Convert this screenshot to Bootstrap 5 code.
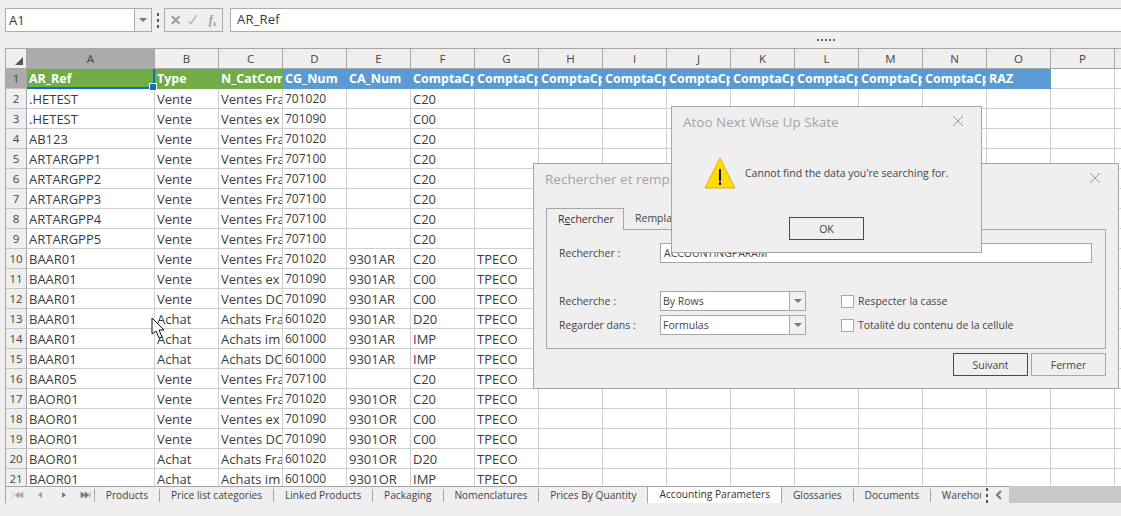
<!doctype html>
<html lang="en">

<head>
    <meta charset="utf-8">
    <meta name="viewport" content="width=device-width, initial-scale=1">
    <title>Accounting Parameters</title>

    <link href="https://cdn.jsdelivr.net/npm/bootstrap@5.3.3/dist/css/bootstrap.min.css" rel="stylesheet">
    <style>
        html, body {
            height: 516px;
            overflow: hidden;
        }

        body {
            background: #efefef;
            color: #3b3b3b;
            font-family: "Open Sans", "Noto Sans", sans-serif;
            font-size: 10.5px;
        }

        .workspace {
            position: relative;
            height: 516px;
            padding: 8px 0 0 5px;
        }

        /* formula bar */
        .formula-row {
            height: 24px;
        }

        .name-box {
            width: 147px;
            height: 24px;
            background: #fff;
            border: 1px solid #ababab;
        }

        .name-text {
            flex: 1;
            padding-left: 3px;
            font-size: 13px;
            line-height: 22px;
        }

        .drop-part {
            width: 17px;
            border-left: 1px solid #ababab;
            background: #f1f1f1;
        }

        .caret-down {
            width: 0;
            height: 0;
            border-left: 4px solid transparent;
            border-right: 4px solid transparent;
            border-top: 4px solid #777;
        }

        .grip-v {
            width: 12px;
            flex: none;
            gap: 3px;
        }

        .grip-v i {
            display: block;
            width: 2px;
            height: 3px;
            background: #555;
        }

        .fx-group {
            width: 59px;
            height: 24px;
            border: 1px solid #ababab;
            gap: 6px;
            padding: 0 0 0 5px;
            margin-right: 7px;
            color: #9a9a9a;
        }

        .fx-mark {
            font-family: "Liberation Serif", serif;
            font-style: italic;
            font-weight: 700;
            font-size: 12px;
            width: 14px;
            margin-left: 4px;
        }

        .fx-mark sub {
            font-size: 8px;
        }

        .formula-input {
            flex: 1;
            height: 24px;
            background: #fff;
            border: 1px solid #ababab;
            border-right: 0;
            padding-left: 6px;
            font-size: 13px;
            line-height: 20px;
            letter-spacing: .2px;
        }

        .grip-h {
            height: 16px;
            padding: 7px 0 0 812px;
            gap: 2px;
        }

        .grip-h i {
            display: block;
            width: 2px;
            height: 2px;
            background: #666;
        }

        /* sheet */
        .sheet-wrap {
            height: 455px;
            border: 1px solid #a6a6a6;
            border-right: 0;
            border-bottom: 0;
            overflow: hidden;
        }

        .sheet-clip {
            height: 437px;
            overflow: hidden;
            background: #fff;
        }

        .sheet-grid {
            table-layout: fixed;
            width: 1173px;
            border-collapse: separate;
            border-spacing: 0;
            font-size: 13px;
        }

        .col-head {
            width: 21px;
        }

        .col-wide {
            width: 128px;
        }

        .col-std {
            width: 64px;
        }

        .sheet-grid th,
        .sheet-grid td {
            height: 20px;
            padding: 1px 0 0 2px;
            border-right: 1px solid #d0d0d0;
            border-bottom: 1px solid #d0d0d0;
            white-space: nowrap;
            overflow: hidden;
            line-height: 18px;
        }

        .sheet-grid td.num-cell {
            font-size: 12px;
        }

        .sheet-grid thead th {
            background: #efefef;
            border-color: #a6a6a6;
            font-weight: 400;
            text-align: center;
            padding: 0;
            color: #444;
            font-size: 11.5px;
        }

        .sheet-grid tbody th {
            background: #efefef;
            border-color: #c4c4c4;
            border-right-color: #a6a6a6;
            font-weight: 400;
            text-align: center;
            padding: 0;
            color: #444;
            font-size: 11.5px;
        }

        .sheet-grid thead th.is-active,
        .sheet-grid tbody th.is-active {
            background: #ababab;
        }

        .corner {
            position: relative;
        }

        .corner svg {
            position: absolute;
            right: 3px;
            bottom: 3px;
        }

        .sheet-grid td.head-green,
        .sheet-grid td.head-blue {
            color: #fff;
            font-weight: 700;
            font-size: 12.5px;
            border-color: transparent;
        }

        .sheet-grid td.head-green {
            background: #70ad47;
        }

        .sheet-grid td.head-blue {
            background: #5b9bd5;
        }

        .sheet-grid td.sel-cell {
            overflow: visible;
            position: relative;
        }

        .sel-bottom {
            position: absolute;
            left: 0;
            right: 0;
            bottom: -1px;
            height: 2px;
            background: #0a70c0;
        }

        .sel-right {
            position: absolute;
            top: 0;
            right: -1px;
            bottom: 2px;
            width: 2px;
            background: #0a70c0;
        }

        .sel-handle {
            position: absolute;
            right: -3px;
            bottom: -3px;
            width: 6px;
            height: 6px;
            background: #0a70c0;
            border: 1px solid #fff;
            box-sizing: content-box;
            z-index: 2;
        }

        /* sheet tabs */
        .tab-strip {
            height: 18px;
            border-top: 1px solid #a6a6a6;
            border-bottom: 1px solid #a6a6a6;
            background: #efefef;
        }

        .tab-nav {
            width: 89px;
            height: 13px;
            flex: none;
            border-right: 1px solid #a6a6a6;
        }

        .tab-list {
            width: 886px;
            flex: none;
            overflow: hidden;
            white-space: nowrap;
        }

        .sheet-tab {
            flex: none;
            padding: 0 11px 0 10.8px;
            line-height: 13px;
            height: 13px;
            border-right: 1px solid #a6a6a6;
            color: #444;
            font-size: 10.2px;
        }

        .sheet-tab.is-on {
            height: 18px;
            line-height: 17px;
            margin: -1px 0 -1px -1px;
            padding: 0 11px 0 12px;
            background: #fff;
            border-left: 1px solid #a6a6a6;
            border-right: 1px solid #a6a6a6;
            color: #333;
        }

        .sheet-tab.no-line {
            border-right: 0;
        }

        .sheet-tab.cut {
            border-right: 0;
            padding-right: 0;
        }

        .scroll-left {
            width: 28px;
            flex: none;
        }

        .scroll-rest {
            flex: 1;
            height: 18px;
            margin: -1px 0;
            background: #c8c8c8;
        }

        /* dialogs */
        .win-box {
            position: absolute;
            background: #efefef;
            border: 1px solid #a6a6a6;
            color: #444;
        }

        .find-win {
            left: 533px;
            top: 163px;
            width: 586px;
            height: 226px;
        }

        .alert-win {
            left: 671px;
            top: 106px;
            width: 311px;
            height: 147px;
        }

        .win-title {
            color: #a3a3a3;
            font-size: 13.5px;
            line-height: 18px;
        }

        .win-close {
            position: absolute;
            top: 8px;
            right: 17px;
        }

        .find-head {
            padding: 6px 11px 0;
            height: 44px;
        }

        .find-tabs {
            margin: 0 12px;
            border: 0;
            height: 21px;
        }

        .find-tabs .nav-link {
            height: 21px;
            padding: 0 11px;
            line-height: 20px;
            font-size: 10.5px;
            color: #444;
            background: transparent;
            border: 0;
            border-radius: 0;
            margin: 0;
        }

        .find-tabs .nav-link.active {
            width: 78px;
            color: #333;
            background: #efefef;
            border: 1px solid #a6a6a6;
            border-bottom: 0;
            height: 22px;
            position: relative;
            z-index: 1;
        }

        .find-panel {
            margin: 0 12px;
            height: 120px;
            padding: 13px 13px 0 12px;
            border: 1px solid #a6a6a6;
        }

        .field-label {
            width: 101px;
            flex: none;
        }

        .text-nudge {
            padding-top: 2px;
        }

        .find-input {
            width: 432px;
            height: 20px;
            padding: 0 3px;
            background: #fff;
            border: 1px solid #a6a6a6;
            font-size: 10.5px;
            line-height: 18px;
            color: #444;
        }

        .find-row {
            height: 20px;
        }

        .find-gap {
            margin-top: 28px;
        }

        .combo-box {
            width: 146px;
            height: 20px;
            background: #fff;
            border: 1px solid #a6a6a6;
            flex: none;
        }

        .combo-text {
            flex: 1;
            padding-left: 2px;
            line-height: 18px;
        }

        .combo-box .drop-part {
            width: 16px;
        }

        .find-panel .tick-box[type=checkbox] {
            margin: 0 4px 0 35px;
            width: 13px;
            height: 13px;
            flex: none;
            border-radius: 0;
            border-color: #a6a6a6;
        }

        .win-btn {
            width: 75px;
            height: 23px;
            padding: 0;
            border-radius: 0;
            font-size: 10.5px;
            line-height: 20px;
            color: #444;
            background: #efefef;
            border: 1px solid #a6a6a6;
        }

        .win-btn.is-default {
            border-color: #4a4a4a;
        }

        .find-actions {
            gap: 3px;
            padding: 4px 12px 0 0;
        }

        .alert-head {
            padding: 6px 11px 0;
            height: 47px;
        }

        .alert-body {
            height: 38px;
            padding-left: 32px;
            gap: 9px;
        }

        .alert-actions {
            padding-top: 25px;
        }

        .mouse-arrow {
            position: absolute;
            left: 151px;
            top: 317px;
            z-index: 5;
        }
    </style>
</head>

<body>
    <div class="workspace">
        <div class="formula-row d-flex">
            <div class="name-box d-flex">
                <div class="name-text">A1</div>
                <div class="drop-part d-flex align-items-center justify-content-center"><span class="caret-down"></span></div>
            </div>
            <div class="grip-v d-flex flex-column align-items-center justify-content-center"><i></i><i></i><i></i></div>
            <div class="fx-group d-flex align-items-center">
                <svg width="12" height="12" viewBox="0 0 12 12"><path d="M2 2l8 8M10 2l-8 8" stroke="#9a9a9a" stroke-width="2" fill="none"/></svg>
                <svg width="12" height="12" viewBox="0 0 12 12"><path d="M2 7l2 3 6-9" stroke="#b4b4b4" stroke-width="1.5" fill="none"/></svg>
                <span class="fx-mark">f<sub>x</sub></span>
            </div>
            <div class="formula-input">AR_Ref</div>
        </div>
        <div class="grip-h d-flex align-items-start"><i></i><i></i><i></i><i></i><i></i></div>

        <div class="sheet-wrap">
            <div class="sheet-clip">
                <table class="sheet-grid">
                    <colgroup id="sheetCols"></colgroup>
                    <thead id="sheetHead"></thead>
                    <tbody id="sheetBody"></tbody>
                </table>
            </div>
            <div class="tab-strip d-flex align-items-center">
                <div class="tab-nav">
                    <svg width="88" height="13" viewBox="0 0 88 13" class="d-block">
                        <path d="M7 3v6M13 3l-4 3 4 3zM17 3l-4 3 4 3z" fill="#aaa" stroke="#aaa" stroke-width=".6"/>
                        <path d="M36 3l-4 3 4 3z" fill="#999"/>
                        <path d="M56 3l4 3-4 3z" fill="#777"/>
                        <path d="M75 3l4 3-4 3zM79 3l4 3-4 3zM84 3v6" fill="#777" stroke="#777" stroke-width=".6"/>
                    </svg>
                </div>
                <div class="tab-list d-flex align-items-center" id="tabList"></div>
                <div class="scroll-left d-flex align-items-center">
                    <div class="grip-v d-flex flex-column align-items-center justify-content-center"><i></i><i></i><i></i></div>
                    <svg width="10" height="12" viewBox="0 0 10 12"><path d="M8 2L4 6l4 4" stroke="#777" stroke-width="2" fill="none"/></svg>
                </div>
                <div class="scroll-rest"></div>
            </div>
        </div>

        <div class="win-box find-win">
            <div class="find-head">
                <div class="win-title">Rechercher et remplacer</div>
                <svg class="win-close" width="12" height="12" viewBox="0 0 12 12"><path d="M1 1l10 10M11 1L1 11" stroke="#9a9a9a" fill="none"/></svg>
            </div>
            <ul class="nav nav-tabs find-tabs">
                <li class="nav-item"><a class="nav-link active" href="#">R<u>e</u>chercher</a></li>
                <li class="nav-item"><a class="nav-link" href="#">Remplacer</a></li>
            </ul>
            <div class="find-panel">
                <div class="find-row d-flex align-items-center">
                    <div class="field-label text-nudge">Rechercher :</div>
                    <div class="find-input">ACCOUNTINGPARAM</div>
                </div>
                <div class="find-row find-gap d-flex align-items-center">
                    <div class="field-label text-nudge">Recherche :</div>
                    <div class="combo-box d-flex">
                        <div class="combo-text">By Rows</div>
                        <div class="drop-part d-flex align-items-center justify-content-center"><span class="caret-down"></span></div>
                    </div>
                    <input class="form-check-input tick-box" type="checkbox">
                    <span class="text-nudge">Respecter la casse</span>
                </div>
                <div class="find-row d-flex align-items-center mt-1">
                    <div class="field-label text-nudge">Regarder dans :</div>
                    <div class="combo-box d-flex">
                        <div class="combo-text">Formulas</div>
                        <div class="drop-part d-flex align-items-center justify-content-center"><span class="caret-down"></span></div>
                    </div>
                    <input class="form-check-input tick-box" type="checkbox">
                    <span class="text-nudge">Totalité du contenu de la cellule</span>
                </div>
            </div>
            <div class="find-actions d-flex justify-content-end">
                <button type="button" class="btn win-btn is-default">Suivant</button>
                <button type="button" class="btn win-btn">Fermer</button>
            </div>
        </div>

        <div class="win-box alert-win">
            <div class="alert-head">
                <div class="win-title">Atoo Next Wise Up Skate</div>
                <svg class="win-close" width="12" height="12" viewBox="0 0 12 12"><path d="M1 1l10 10M11 1L1 11" stroke="#9a9a9a" fill="none"/></svg>
            </div>
            <div class="alert-body d-flex align-items-center">
                <svg width="32" height="32" viewBox="0 0 32 32">
                    <path d="M16 1L31 31H1z" fill="#ffdc00" stroke="#f0a91e" stroke-linejoin="round"/>
                    <rect x="15" y="12" width="2" height="12" fill="#111"/>
                    <rect x="15" y="25" width="2" height="3" fill="#111"/>
                </svg>
                <span class="text-nudge">Cannot find the data you're searching for.</span>
            </div>
            <div class="alert-actions d-flex justify-content-center">
                <button type="button" class="btn win-btn is-default">OK</button>
            </div>
        </div>

        <svg class="mouse-arrow" width="14" height="22" viewBox="0 0 14 22">
            <path d="M1 1v16l4-3 3 7 3-1-3-7h5z" fill="#fff" stroke="#111"/>
        </svg>
    </div>

    <script src="https://cdn.jsdelivr.net/npm/bootstrap@5.3.3/dist/js/bootstrap.bundle.min.js"></script>
    <script>
        const letters = 'ABCDEFGHIJKLMNOPQ'.split('');
        const headers = ['AR_Ref', 'Type', 'N_CatCom', 'CG_Num', 'CA_Num', 'ComptaCp', 'ComptaCp', 'ComptaCp', 'ComptaCp',
            'ComptaCp', 'ComptaCp', 'ComptaCp', 'ComptaCp', 'ComptaCp', 'RAZ'];
        const rows = [
            ['.HETEST', 'Vente', 'Ventes Fra', '701020', '', 'C20', ''],
            ['.HETEST', 'Vente', 'Ventes ex', '701090', '', 'C00', ''],
            ['AB123', 'Vente', 'Ventes Fra', '701020', '', 'C20', ''],
            ['ARTARGPP1', 'Vente', 'Ventes Fra', '707100', '', 'C20', ''],
            ['ARTARGPP2', 'Vente', 'Ventes Fra', '707100', '', 'C20', ''],
            ['ARTARGPP3', 'Vente', 'Ventes Fra', '707100', '', 'C20', ''],
            ['ARTARGPP4', 'Vente', 'Ventes Fra', '707100', '', 'C20', ''],
            ['ARTARGPP5', 'Vente', 'Ventes Fra', '707100', '', 'C20', ''],
            ['BAAR01', 'Vente', 'Ventes Fra', '701020', '9301AR', 'C20', 'TPECO'],
            ['BAAR01', 'Vente', 'Ventes ex', '701090', '9301AR', 'C00', 'TPECO'],
            ['BAAR01', 'Vente', 'Ventes DC', '701090', '9301AR', 'C00', 'TPECO'],
            ['BAAR01', 'Achat', 'Achats Fra', '601020', '9301AR', 'D20', 'TPECO'],
            ['BAAR01', 'Achat', 'Achats im', '601000', '9301AR', 'IMP', 'TPECO'],
            ['BAAR01', 'Achat', 'Achats DC', '601000', '9301AR', 'IMP', 'TPECO'],
            ['BAAR05', 'Vente', 'Ventes Fra', '707100', '', 'C20', 'TPECO'],
            ['BAOR01', 'Vente', 'Ventes Fra', '701020', '9301OR', 'C20', 'TPECO'],
            ['BAOR01', 'Vente', 'Ventes ex', '701090', '9301OR', 'C00', 'TPECO'],
            ['BAOR01', 'Vente', 'Ventes DC', '701090', '9301OR', 'C00', 'TPECO'],
            ['BAOR01', 'Achat', 'Achats Fra', '601020', '9301OR', 'D20', 'TPECO'],
            ['BAOR01', 'Achat', 'Achats im', '601000', '9301OR', 'IMP', 'TPECO']
        ];
        const tabs = ['Products', 'Price list categories', 'Linked Products', 'Packaging', 'Nomenclatures', 'Prices By Quantity',
            'Accounting Parameters', 'Glossaries', 'Documents', 'Warehouses'];

        let cols = '<col class="col-head"><col class="col-wide">';
        for (let i = 1; i < letters.length; i++) cols += '<col class="col-std">';
        document.getElementById('sheetCols').innerHTML = cols;

        let head = '<tr><th class="corner"><svg width="8" height="8" viewBox="0 0 8 8"><path d="M8 0v8H0z" fill="#555"/></svg></th>';
        letters.forEach((l, i) => {
            head += '<th class="' + (i === 0 ? 'is-active' : '') + '">' + l + '</th>';
        });
        document.getElementById('sheetHead').innerHTML = head + '</tr>';

        let body = '<tr><th class="is-active">1</th>';
        letters.forEach((l, i) => {
            if (i >= headers.length) {
                body += '<td></td>';
                return;
            }
            const tone = i < 3 ? 'head-green' : 'head-blue';
            if (i === 0) {
                body += '<td class="' + tone + ' sel-cell">' + headers[i] +
                    '<span class="sel-bottom"></span><span class="sel-right"></span><span class="sel-handle"></span></td>';
            } else {
                body += '<td class="' + tone + '">' + headers[i] + '</td>';
            }
        });
        body += '</tr>';
        rows.forEach((row, r) => {
            body += '<tr><th>' + (r + 2) + '</th>';
            letters.forEach((l, i) => {
                body += '<td' + (i === 3 ? ' class="num-cell"' : '') + '>' + (row[i] || '') + '</td>';
            });
            body += '</tr>';
        });
        document.getElementById('sheetBody').innerHTML = body;

        document.getElementById('tabList').innerHTML = tabs.map((t, i) => {
            let cls = 'sheet-tab';
            if (i === 6) cls += ' is-on';
            if (i === 5) cls += ' no-line';
            if (i === 9) cls += ' cut';
            return '<div class="' + cls + '">' + t + '</div>';
        }).join('');
    </script>
</body>

</html>
